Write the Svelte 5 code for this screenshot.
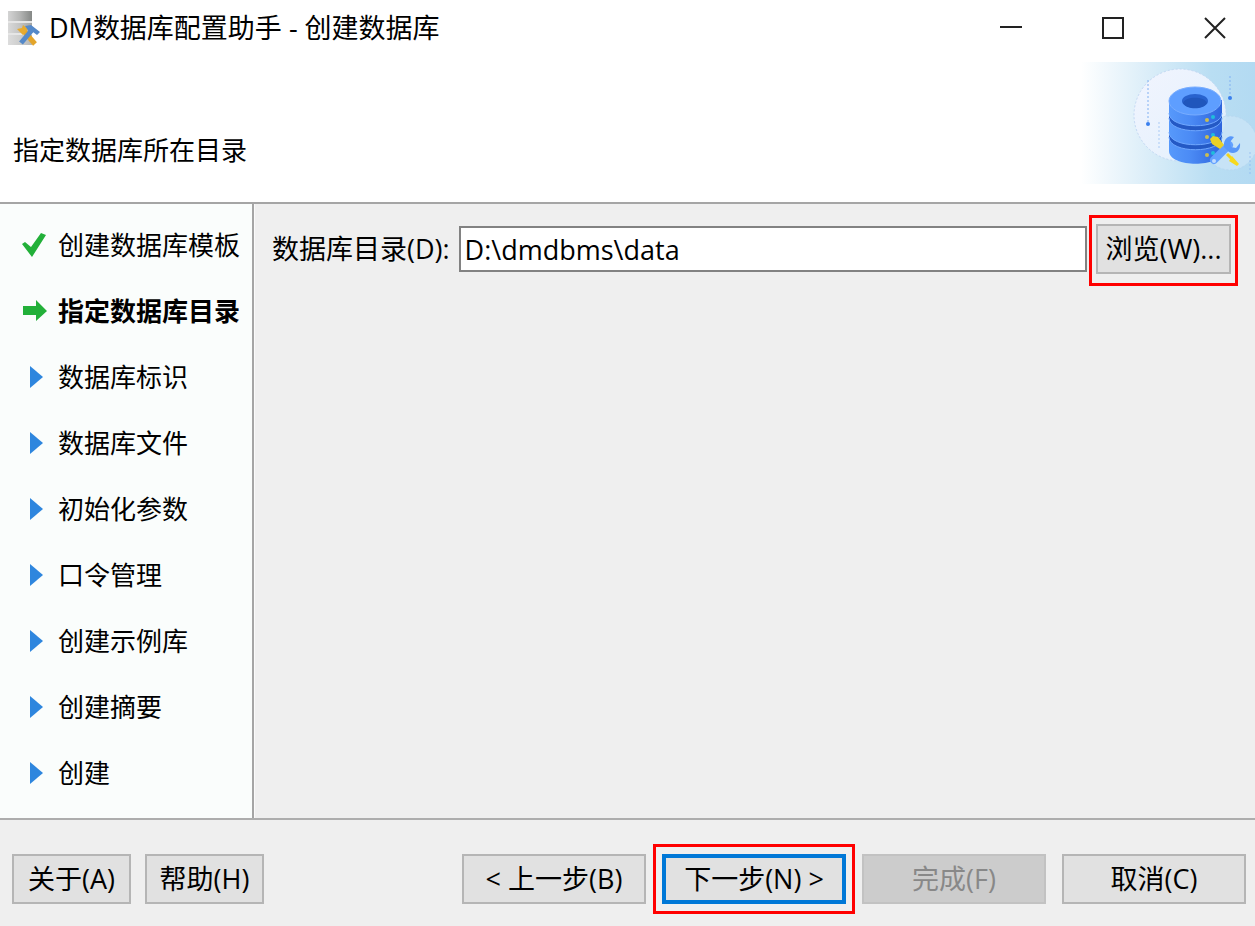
<script lang="ts">
  type StepState = "done" | "current" | "pending";

  const steps: { label: string; state: StepState }[] = [
    { label: "创建数据库模板", state: "done" },
    { label: "指定数据库目录", state: "current" },
    { label: "数据库标识", state: "pending" },
    { label: "数据库文件", state: "pending" },
    { label: "初始化参数", state: "pending" },
    { label: "口令管理", state: "pending" },
    { label: "创建示例库", state: "pending" },
    { label: "创建摘要", state: "pending" },
    { label: "创建", state: "pending" },
  ];

  let directory = $state("D:\\dmdbms\\data");
</script>

<div class="window">
  <header class="titlebar">
    <svg class="app-icon" width="34" height="36" viewBox="0 0 34 36" aria-hidden="true">
      <defs>
        <linearGradient id="metal">
          <stop offset="0" stop-color="#d4d4d4" />
          <stop offset="0.5" stop-color="#b4b5b4" />
          <stop offset="1" stop-color="#858886" />
        </linearGradient>
      </defs>
      <rect x="1" y="1" width="24" height="34" fill="#e6e6e6" />
      <rect x="1" y="1" width="24" height="10" fill="url(#metal)" />
      <rect x="1" y="13" width="24" height="10" fill="url(#metal)" opacity="0.7" />
      <rect x="1" y="25" width="24" height="10" fill="url(#metal)" opacity="0.5" />
      <path d="M16 20l12 14" stroke="#e3a52b" stroke-width="5" />
      <path d="M10 19l5-1 1-3 5 4-5 6z" fill="#e8ab2e" />
      <path d="M14 33l11-13" stroke="#5589c9" stroke-width="5" />
      <path d="M18 16l6-1 9 7-3 3-4-3-3 1z" fill="#5589c9" />
    </svg>
    <h1>DM数据库配置助手 - 创建数据库</h1>
    <div class="controls">
      <button aria-label="最小化">
        <svg width="22" height="22" viewBox="0 0 22 22"><path d="M0 10h22" /></svg>
      </button>
      <button aria-label="最大化">
        <svg width="22" height="22" viewBox="0 0 22 22"><path d="M1 1h20v20H1z" /></svg>
      </button>
      <button aria-label="关闭">
        <svg width="22" height="22" viewBox="0 0 22 22"><path d="M1 1l20 20M21 1L1 21" /></svg>
      </button>
    </div>
  </header>

  <div class="banner">
    <h2>指定数据库所在目录</h2>
    <svg width="174" height="122" viewBox="0 0 174 122" aria-hidden="true">
      <defs>
        <linearGradient id="sky">
          <stop offset="0" stop-color="#fff" />
          <stop offset="0.35" stop-color="#deeff9" />
          <stop offset="0.75" stop-color="#b9def3" />
          <stop offset="1" stop-color="#b3daf2" />
        </linearGradient>
        <linearGradient id="disc" x2="1" y2="1">
          <stop offset="0" stop-color="#f1f4fe" />
          <stop offset="0.65" stop-color="#e8f2fd" />
          <stop offset="1" stop-color="#cfe7f8" />
        </linearGradient>
        <linearGradient id="drum">
          <stop offset="0" stop-color="#5799fb" />
          <stop offset="0.4" stop-color="#4b8bf5" />
          <stop offset="1" stop-color="#2e64dc" />
        </linearGradient>
      </defs>
      <rect width="174" height="122" fill="url(#sky)" />
      <circle cx="99" cy="53" r="46" fill="url(#disc)" stroke="#c3d8f3" stroke-dasharray="2 2" />
      <circle cx="149" cy="81" r="27" fill="#cbe5f6" fill-opacity="0.8" stroke="#b8d8f1" stroke-dasharray="2 2" />
      <g stroke="#82b1f2" stroke-dasharray="2 2">
        <path d="M67 18v42M149 14v22" />
        <path d="M78 60v26M169 90v22" opacity="0.6" />
      </g>
      <circle cx="67" cy="62" r="2" fill="#397fee" />
      <circle cx="149" cy="36" r="2" fill="#397fee" />

      <path d="M88 76v13c0 17 53 17 53 0V76z" fill="url(#drum)" />
      <path d="M88 68v7c0 17 53 17 53 0v-7z" fill="#2459c5" />
      <path d="M88 58v12c0 17 53 17 53 0V58z" fill="url(#drum)" />
      <path d="M88 70c0 17 53 17 53 0M88 75c0 17 53 17 53 0" fill="none" stroke="#70a8ff" />
      <path d="M88 48v8c0 17 53 17 53 0v-8z" fill="#2459c5" />
      <path d="M88 38v13c0 17 53 17 53 0V38z" fill="url(#drum)" />
      <path d="M88 51c0 17 53 17 53 0M88 56c0 17 53 17 53 0" fill="none" stroke="#70a8ff" />
      <ellipse cx="114" cy="39" rx="26" ry="14" fill="#5e9eff" stroke="#78adff" />
      <ellipse cx="114" cy="39" rx="13" ry="7" fill="#2862ce" />
      <path d="M102 41c2-7 22-7 24 0-3 7-21 7-24 0z" fill="#2056bc" />
      <g fill="#c9bd51">
        <circle cx="126" cy="58" r="2" /><circle cx="126" cy="75" r="2" /><circle cx="126" cy="93" r="2" />
      </g>
      <g fill="#20bddb">
        <circle cx="132" cy="55" r="2" /><circle cx="132" cy="73" r="2" /><circle cx="132" cy="91" r="2" />
      </g>
      <path d="M146 92l7 7" stroke="#f4d51c" stroke-width="3" />
      <path d="M151 94l7 8-2 2-8-5z" fill="#f7d91c" />
      <path d="M133 98l15-15" stroke="#63a1ff" stroke-width="8" stroke-linecap="round" />
      <path d="M143 85c-1-7 4-13 10-10l-4 5 1 5 5 1 4-5c1 8-5 12-11 9z" fill="#5797fa" />
      <path d="M129 77l3-3 5 1 6 8-4 4-8-5z" fill="#ead026" />
      <circle cx="133" cy="99" r="2" fill="#c0dbff" />
    </svg>
  </div>

  <main>
    <ol class="steps">
      {#each steps as step (step.label)}
        <li class={step.state} aria-current={step.state === "current" ? "step" : undefined}>
          <svg width="28" height="28" viewBox="0 0 28 28" aria-hidden="true">
            {#if step.state === "done"}
              <path d="M2 13l3-2 6 5L21 2l5 2-14 22z" fill="#22b039" />
            {:else if step.state === "current"}
              <path d="M3 9h13V3l11 11-11 10v-6H3z" fill="#22b039" />
            {:else}
              <path d="M10 3l13 11-13 11z" fill="#2e86de" />
            {/if}
          </svg>
          <span>{step.label}</span>
        </li>
      {/each}
    </ol>

    <section class="content">
      <div class="field">
        <label for="directory">数据库目录(D):</label>
        <input id="directory" type="text" bind:value={directory} />
        <button class="btn browse">浏览(W)...</button>
      </div>
    </section>
  </main>

  <footer>
    <div class="group">
      <button class="btn small">关于(A)</button>
      <button class="btn small">帮助(H)</button>
    </div>
    <div class="group nav">
      <button class="btn">&lt; 上一步(B)</button>
      <button class="btn next">下一步(N) &gt;</button>
      <button class="btn" disabled>完成(F)</button>
      <button class="btn">取消(C)</button>
    </div>
  </footer>
</div>

<style>
  :global(body) {
    margin: 0;
  }
  .window {
    display: flex;
    flex-direction: column;
    min-height: 100vh;
    background: #efefef;
    color: #000;
    font-family: "Open Sans", "Noto Sans CJK SC", sans-serif;
    font-size: 26px;
    line-height: 32px;
  }
  button,
  input {
    box-sizing: border-box;
    margin: 0;
    border-radius: 0;
    color: inherit;
    font: inherit;
  }
  h1,
  h2 {
    margin: 0;
    font: inherit;
  }
  h1,
  .field,
  footer {
    font-size: 27px;
  }
  .titlebar {
    display: flex;
    align-items: center;
    gap: 8px;
    height: 56px;
    padding: 0 29px 0 7px;
    background: #fff;
  }
  .app-icon {
    flex: none;
  }
  .controls {
    display: flex;
    gap: 80px;
    margin-left: auto;
  }
  .controls button {
    display: flex;
    padding: 0;
    border: 0;
    background: none;
  }
  .controls svg {
    fill: none;
    stroke: #222;
    stroke-width: 2;
  }
  .banner {
    display: flex;
    align-items: flex-end;
    justify-content: space-between;
    padding: 6px 0 18px 13px;
    background: #fff;
    border-bottom: 2px solid #a5a5a5;
  }
  .banner h2 {
    padding-bottom: 18px;
  }
  .banner svg {
    flex: none;
  }
  main {
    display: flex;
    flex: 1;
  }
  .steps {
    flex: none;
    box-sizing: border-box;
    width: 254px;
    margin: 0;
    padding: 8px 0 10px 20px;
    list-style: none;
    background: #fafdfc;
    border-right: 2px solid #a5a5a5;
  }
  .steps li {
    display: flex;
    align-items: center;
    gap: 10px;
    height: 66px;
    white-space: nowrap;
  }
  .steps svg {
    flex: none;
  }
  .current {
    font-weight: 700;
  }
  .content {
    flex: 1;
    padding: 20px 24px 20px 17px;
    border-left: 1px solid #fafafa;
  }
  .field {
    display: flex;
    align-items: center;
    gap: 9px;
  }
  .field label {
    white-space: nowrap;
  }
  .field input {
    flex: 1;
    min-width: 0;
    height: 46px;
    padding: 0 4px;
    border: 2px solid #828282;
    background: #fff;
  }
  .btn {
    position: relative;
    width: 184px;
    height: 50px;
    padding: 0;
    border: 2px solid #b5b5b5;
    background: #e1e1e1;
    white-space: nowrap;
  }
  .btn:disabled {
    border-color: #c2c2c2;
    background: #ccc;
    color: #888;
  }
  .browse::after,
  .next::after {
    content: "";
    position: absolute;
    border: 3px solid #f00;
  }
  .browse {
    width: 135px;
  }
  .browse::after {
    inset: -11px -9px -14px;
  }
  .small {
    width: 119px;
  }
  .next {
    border: 4px solid #0078d7;
  }
  .next::after {
    inset: -14px -13px;
  }
  footer {
    display: flex;
    justify-content: space-between;
    padding: 34px 9px 22px 12px;
    border-top: 2px solid #adadad;
  }
  .group {
    display: flex;
    gap: 14px;
  }
  .nav {
    gap: 16px;
  }
</style>
